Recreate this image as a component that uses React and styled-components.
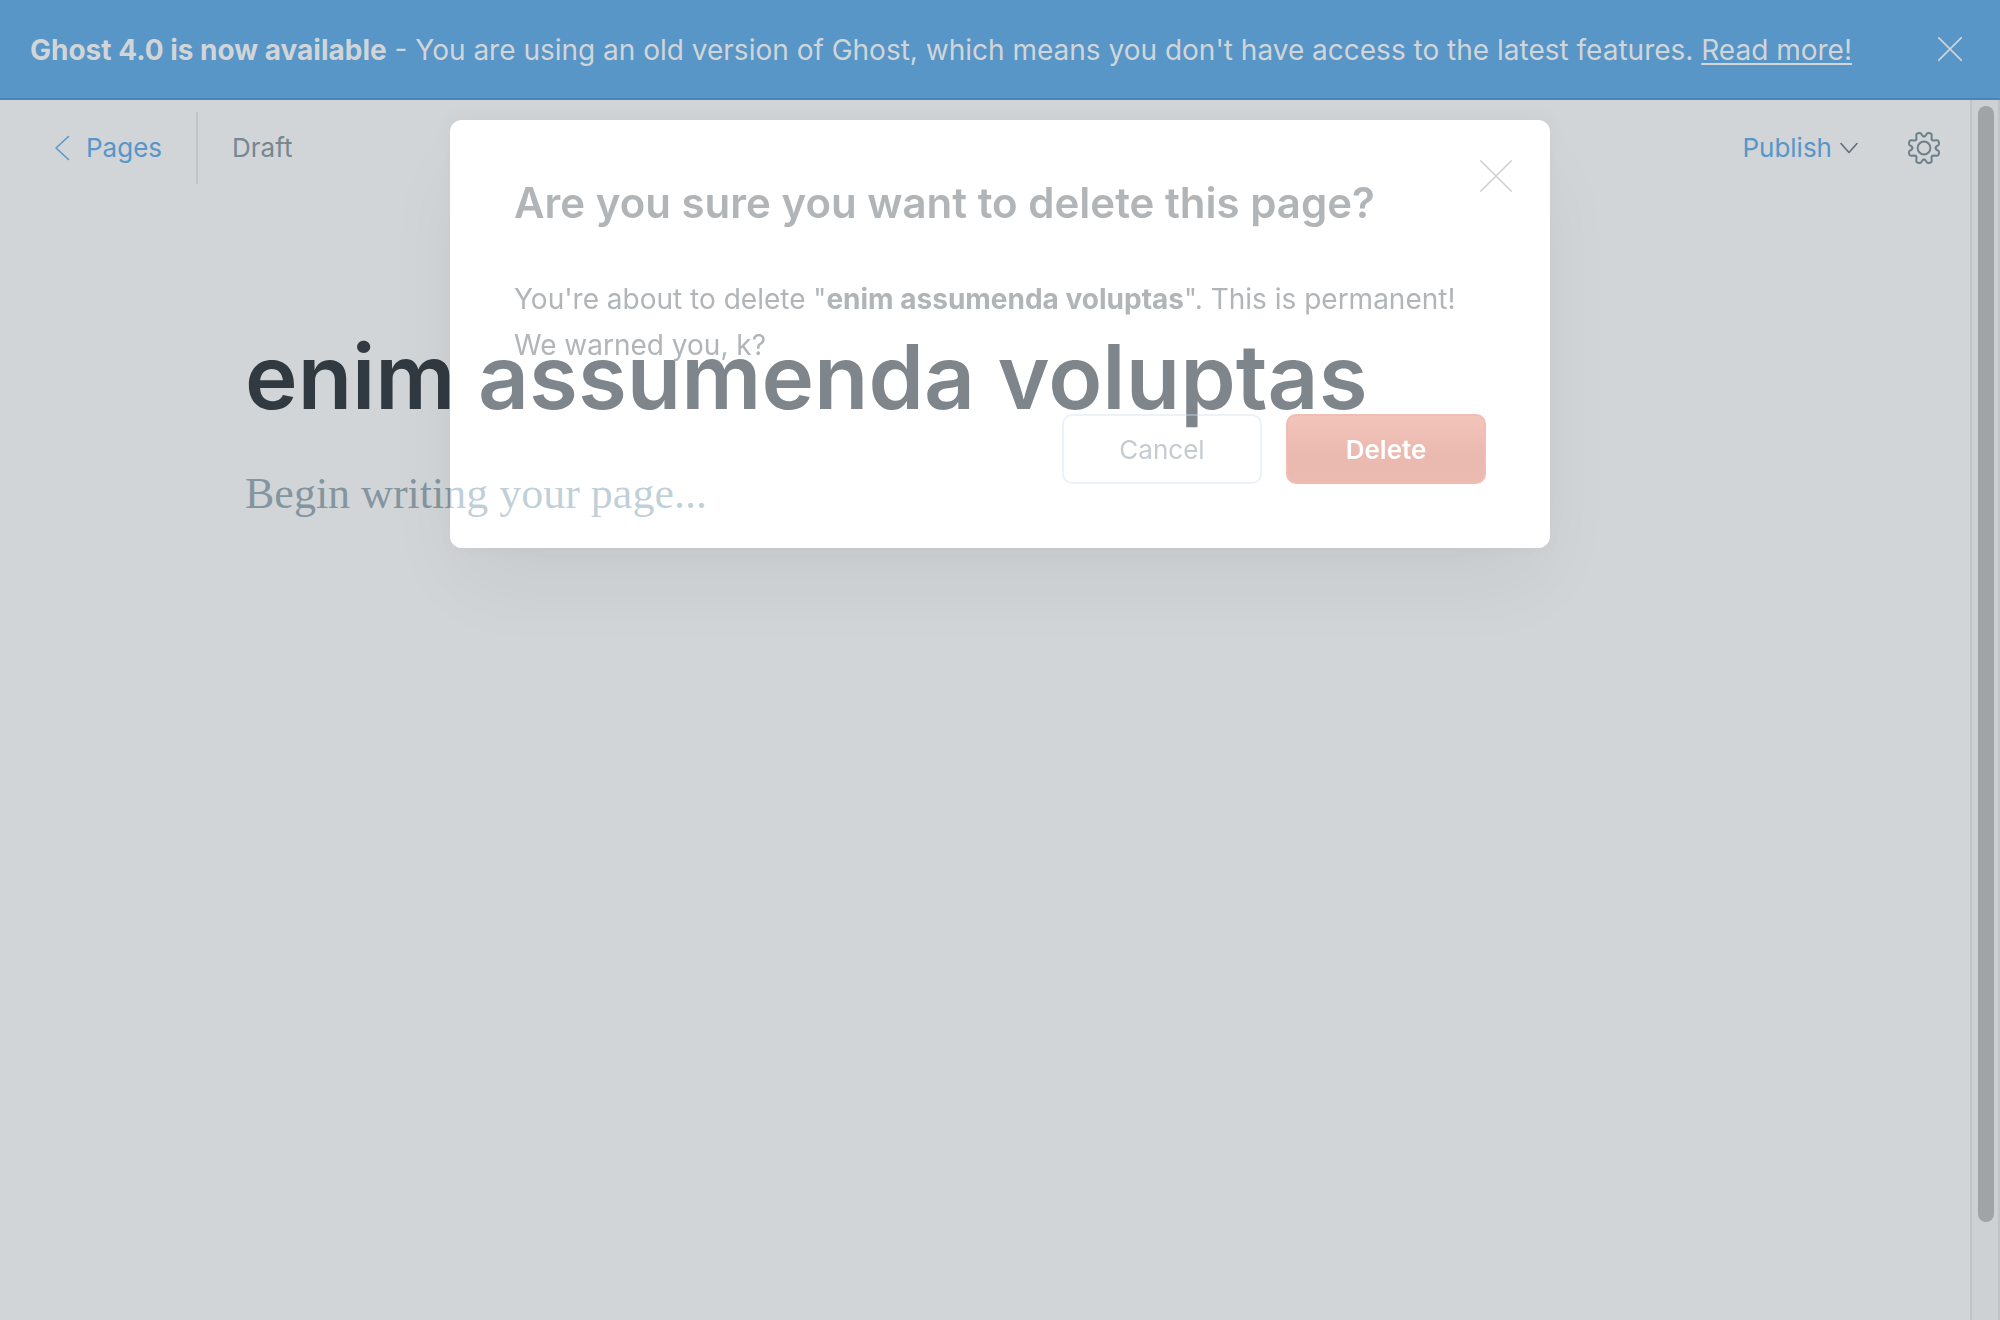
import React from "react";
import styled, { createGlobalStyle } from "styled-components";

const GlobalStyle = createGlobalStyle`
  *, *::before, *::after { box-sizing: border-box; }
  body {
    margin: 0;
    overflow: hidden;
    background: #d1d5d8;
    font-family: Inter, "Liberation Sans", sans-serif;
  }
  button, input, textarea { font: inherit; margin: 0; padding: 0; border: 0; background: none; }
  button { cursor: pointer; }
`;

const Shell = styled.div`
  display: flex;
  flex-direction: column;
  height: 100vh;
`;

const Banner = styled.aside`
  display: flex;
  align-items: center;
  justify-content: space-between;
  flex: none;
  height: 100px;
  padding: 0 38px 0 30px;
  border-bottom: 2px solid #4587be;
  background: #5896c8;
  color: #d1d5d8;
`;

const BannerText = styled.p`
  margin: 0;
  padding-top: 2px;
  font-size: 28px;
  line-height: 40px;
  white-space: nowrap;
`;

const BannerLink = styled.a`
  color: inherit;
  text-decoration: underline;
  text-decoration-thickness: 2px;
  text-underline-offset: 3px;
`;

const IconButton = styled.button`
  display: flex;
  color: ${(p) => p.$color};
`;

const Body = styled.div`
  display: flex;
  flex: 1;
  min-height: 0;
`;

const Main = styled.main`
  flex: 1;
  min-width: 0;
`;

const Header = styled.header`
  display: flex;
  align-items: center;
  justify-content: space-between;
  height: 96px;
  padding: 0 30px 0 54px;
`;

const Group = styled.div`
  display: flex;
  align-items: center;
  gap: ${(p) => p.$gap}px;
`;

const BackLink = styled.a`
  display: flex;
  align-items: center;
  gap: 16px;
  color: #5896c8;
  font-size: 26px;
  line-height: 72px;
  text-decoration: none;
`;

const Status = styled.span`
  padding-left: 34px;
  border-left: 2px solid #bdc5ca;
  color: #768791;
  font-size: 26px;
  line-height: 72px;
`;

const PublishButton = styled.button`
  display: flex;
  align-items: center;
  gap: 8px;
  color: #5896c8;
  font-size: 26px;
  line-height: 72px;
`;

const Editor = styled.section`
  display: flex;
  flex-direction: column;
  gap: 28px;
  max-width: 1480px;
  margin: 0 auto;
  padding-top: 120px;
`;

const TitleInput = styled.input`
  width: 100%;
  height: 120px;
  color: #313a40;
  font-size: 89px;
  font-weight: 600;
  outline: none;
`;

const BodyInput = styled.textarea`
  width: 100%;
  height: 160px;
  color: #313a40;
  font-family: "Liberation Serif", serif;
  font-size: 44px;
  line-height: 60px;
  resize: none;
  outline: none;
  &::placeholder { color: #84959f; opacity: 1; }
`;

const ScrollTrack = styled.div`
  display: flex;
  flex: none;
  width: 30px;
  padding: 6px 4px 98px 6px;
  border: solid #bfc4c7;
  border-width: 0 2px;
  background: #cdd1d4;
`;

const ScrollThumb = styled.div`
  width: 16px;
  border-radius: 8px;
  background: #a0a4a7;
`;

const Overlay = styled.div`
  position: fixed;
  inset: 0;
  display: flex;
  align-items: flex-start;
  justify-content: center;
  padding-top: 120px;
`;

/* Half way through its fade, so the editor still shows through the panel. */
const Dialog = styled.section`
  position: relative;
  width: 1100px;
  padding: 56px 64px 64px;
  border-radius: 12px;
  background: rgba(255, 255, 255, 0.34);
  backdrop-filter: brightness(1.23);
  box-shadow: 0 0 24px rgba(0, 0, 0, 0.04), 0 40px 80px -12px rgba(0, 0, 0, 0.06);
  color: #b1b5b8;
`;

const DialogClose = styled(IconButton)`
  position: absolute;
  top: 40px;
  right: 38px;
`;

const DialogTitle = styled.h1`
  margin: 0 0 46px;
  font-size: 42px;
  font-weight: 600;
  line-height: 54px;
`;

const DialogText = styled.p`
  margin: 0;
  font-size: 28px;
  line-height: 46px;
`;

const DialogActions = styled.footer`
  display: flex;
  justify-content: flex-end;
  gap: 24px;
  margin-top: 46px;
`;

const CancelButton = styled.button`
  width: 200px;
  height: 70px;
  border: 2px solid rgba(208, 222, 234, 0.4);
  border-radius: 10px;
  color: #c5cbd0;
  font-size: 26px;
`;

const DeleteButton = styled.button`
  width: 200px;
  height: 70px;
  border: 2px solid #f0bdb2;
  border-radius: 10px;
  background: linear-gradient(#f2c5bb, #eab9af 60%, #ebbab0);
  color: #fff;
  font-size: 26px;
  font-weight: 600;
`;

const Cross = ({ size, stroke }) => (
  <svg width={size} height={size} viewBox="0 0 24 24" fill="none" stroke="currentColor" strokeWidth={stroke} aria-hidden="true">
    <path d="M.5.5l23 23M23.5.5l-23 23" strokeLinecap="round" />
  </svg>
);

const ArrowLeft = () => (
  <svg width="16" height="26" viewBox="0 0 16 26" fill="none" stroke="currentColor" strokeWidth="1.5" strokeLinecap="round" strokeLinejoin="round" aria-hidden="true">
    <path d="M14.5 1.5L2 13l12.5 11.5" />
  </svg>
);

const ArrowDown = () => (
  <svg width="18" height="12" viewBox="0 0 18 12" fill="none" stroke="#5b7182" strokeWidth="1.6" strokeLinecap="round" strokeLinejoin="round" aria-hidden="true">
    <path d="M1 1.5l8 9 8-9" />
  </svg>
);

const Gear = () => (
  <svg width="32" height="32" viewBox="0 0 32 32" fill="none" stroke="currentColor" strokeWidth="2" strokeLinecap="round" strokeLinejoin="round" aria-hidden="true">
    <circle cx="16" cy="16" r="6.4" />
    {[0, 90, 180, 270].map((angle) => (
      <path
        key={angle}
        transform={`rotate(${angle} 16 16)`}
        d="M16 4.400Q17.300 4.400 18 3L18.600 1.900Q19.200 .9 20.400 1L22 1.200Q23.800 1.400 23.700 3.200L23.500 6.500Q23.500 8.500 25.500 8.500L28.800 8.300Q30.600 8.200 30.800 10L31 11.600Q31.100 12.800 30.100 13.400L29 14Q27.600 14.700 27.600 16"
      />
    ))}
  </svg>
);

export default function App() {
  return (
    <>
      <GlobalStyle />
      <Shell>
        <Banner>
          <BannerText>
            <strong>Ghost 4.0 is now available</strong> - You are using an old version of Ghost, which means you don't have access to the latest features.{" "}
            <BannerLink href="#upgrade">Read more!</BannerLink>
          </BannerText>
          <IconButton type="button" $color="#d1d5d8" aria-label="Dismiss">
            <Cross size={24} stroke={1.6} />
          </IconButton>
        </Banner>
        <Body>
          <Main>
            <Header>
              <Group $gap={34}>
                <BackLink href="#pages"><ArrowLeft />Pages</BackLink>
                <Status>Draft</Status>
              </Group>
              <Group $gap={50}>
                <PublishButton type="button">Publish<ArrowDown /></PublishButton>
                <IconButton type="button" $color="#6d7f89" aria-label="Settings"><Gear /></IconButton>
              </Group>
            </Header>
            <Editor>
              <TitleInput aria-label="Page title" defaultValue="enim assumenda voluptas" spellCheck={false} />
              <BodyInput aria-label="Page content" placeholder="Begin writing your page..." />
            </Editor>
          </Main>
          <ScrollTrack><ScrollThumb /></ScrollTrack>
        </Body>
      </Shell>
      <Overlay>
        <Dialog role="dialog" aria-labelledby="dialog-title">
          <DialogTitle id="dialog-title">Are you sure you want to delete this page?</DialogTitle>
          <DialogText>
            You're about to delete "<strong>enim assumenda voluptas</strong>". This is permanent! We warned you, k?
          </DialogText>
          <DialogActions>
            <CancelButton type="button">Cancel</CancelButton>
            <DeleteButton type="button">Delete</DeleteButton>
          </DialogActions>
          <DialogClose type="button" $color="#c9cbcd" aria-label="Close">
            <Cross size={32} stroke={1} />
          </DialogClose>
        </Dialog>
      </Overlay>
    </>
  );
}
